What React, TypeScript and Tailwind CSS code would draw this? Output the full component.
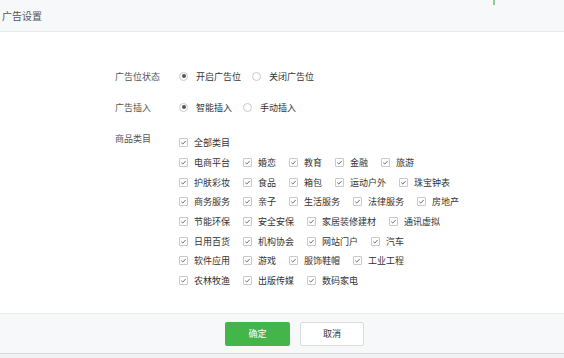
import React from "react";

const rows: string[][] = [
  ["全部类目"],
  ["电商平台", "婚恋", "教育", "金融", "旅游"],
  ["护肤彩妆", "食品", "箱包", "运动户外", "珠宝钟表"],
  ["商务服务", "亲子", "生活服务", "法律服务", "房地产"],
  ["节能环保", "安全安保", "家居装修建材", "通讯虚拟"],
  ["日用百货", "机构协会", "网站门户", "汽车"],
  ["软件应用", "游戏", "服饰鞋帽", "工业工程"],
  ["农林牧渔", "出版传媒", "数码家电"],
];

function Radio({ label, checked }: { label: string; checked?: boolean }) {
  return (
    <label className="flex items-center mr-[11px]">
      <span className="flex h-[9px] w-[9px] items-center justify-center rounded-full border border-[#c9c9c9] bg-white">
        {checked && <span className="h-[4px] w-[4px] rounded-full bg-[#555]" />}
      </span>
      <span className="ml-[8px] text-[#333]">{label}</span>
    </label>
  );
}

function Check({ label }: { label: string }) {
  return (
    <label className="flex items-center mr-[13px]">
      <span className="flex h-[9px] w-[9px] items-center justify-center rounded-[1px] border border-[#c9c9c9] bg-white">
        <svg width="7" height="7" viewBox="0 0 8 8" fill="none">
          <path d="M1.5 4.2 L3.2 5.8 L6.5 2.2" stroke="#555" strokeWidth="1" />
        </svg>
      </span>
      <span className="ml-[6px] text-[#333] whitespace-nowrap">{label}</span>
    </label>
  );
}

export default function App() {
  return (
    <div
      className="relative flex h-[358px] w-[564px] flex-col bg-[#f1f2f4] text-[9px] leading-none"
      style={{ fontFamily: '"Noto Sans CJK SC", "Noto Sans", sans-serif' }}
    >
      <div className="absolute left-[493px] top-0 h-[5px] w-[2px] bg-[#86d08f]" />
      <div className="flex h-[32px] items-center border-b border-[#e6e8eb] bg-[#f7f8fa] pl-[2px] text-[10px] text-[#555]">
        广告设置
      </div>
      <div className="h-[281px] bg-white pl-[115px] pt-[34px]">
        <div className="flex h-[20px] items-center">
          <div className="w-[64px] text-[#555]">广告位状态</div>
          <Radio label="开启广告位" checked />
          <Radio label="关闭广告位" />
        </div>
        <div className="mt-[11px] flex h-[20px] items-center">
          <div className="w-[64px] text-[#555]">广告插入</div>
          <Radio label="智能插入" checked />
          <Radio label="手动插入" />
        </div>
        <div className="mt-[11px] flex">
          <div className="flex h-[20px] w-[64px] items-center text-[#555]">商品类目</div>
          <div className="pt-[5px]">
            {rows.map((r, i) => (
              <div key={i} className="flex h-[19.7px] items-center">
                {r.map((c) => (
                  <Check key={c} label={c} />
                ))}
              </div>
            ))}
          </div>
        </div>
      </div>
      <div className="flex h-[41px] items-center border-y border-t-[#e9ebee] border-b-[#d6d6d6] bg-[#f7f8fa] pl-[225px]">
        <button className="h-[24px] w-[65px] rounded-[2px] bg-[#44b549] text-white">确定</button>
        <button className="ml-[10px] h-[24px] w-[64px] rounded-[2px] border border-[#dcdcdc] bg-white text-[#333]">
          取消
        </button>
      </div>
    </div>
  );
}
